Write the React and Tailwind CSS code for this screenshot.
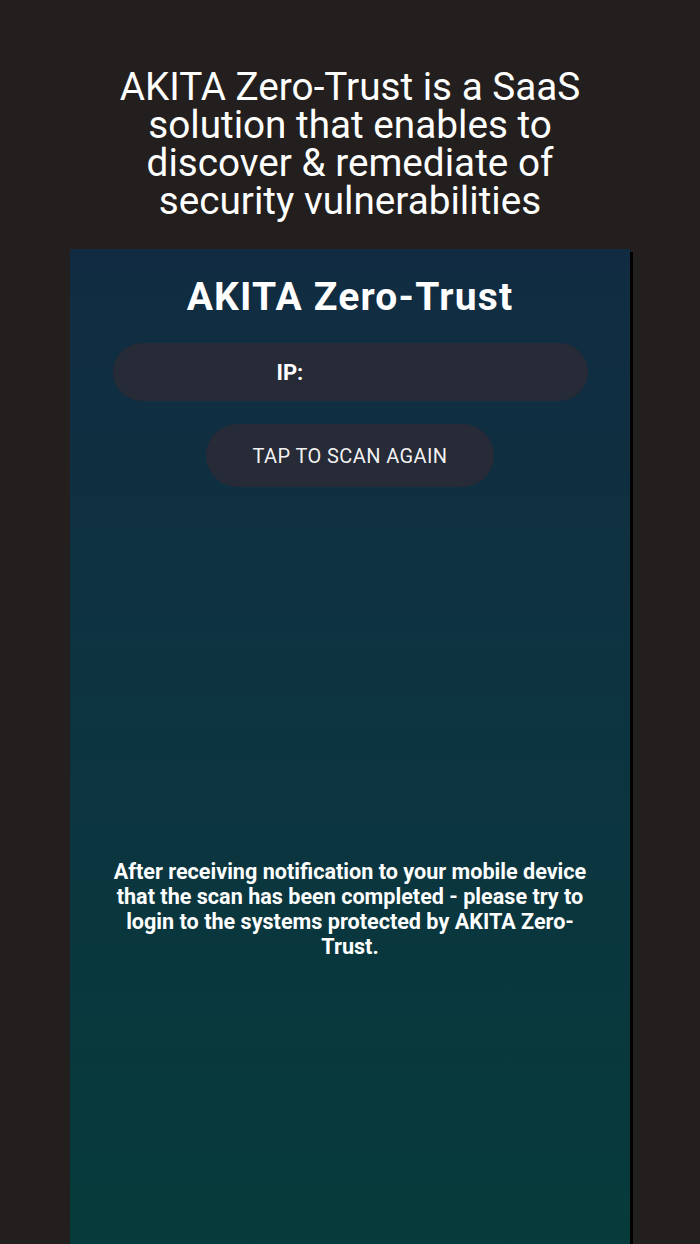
import React from 'react';

const App = () => {
  return (
    <div className="min-h-[1244px] w-[700px] bg-[#231f1e] flex flex-col items-center font-['Roboto',sans-serif] text-white">
      {/* Intro headline */}
      <h2 className="mt-[68px] w-[520px] text-center text-[38.7px] leading-[38px] font-normal">
        AKITA Zero-Trust is a SaaS solution that enables to discover &amp; remediate of security vulnerabilities
      </h2>

      {/* Phone screen panel */}
      <div className="mt-[29px] w-[560px] flex-1 h-[994px] bg-gradient-to-b from-[#112c42] via-[#0c3440] to-[#063b3b] shadow-[3px_3px_0_#000] flex flex-col items-center">
        <h1 className="mt-[27px] text-[39px] leading-[42px] font-bold tracking-[1.2px]">AKITA Zero-Trust</h1>

        <div className="mt-[25px] w-[475px] h-[58px] rounded-full bg-[#272a37] flex items-center">
          <span className="ml-[164px] text-[22px] font-bold">IP:</span>
        </div>

        <button className="mt-[23px] w-[288px] h-[63px] rounded-full bg-[#272a37] text-[20px] tracking-[0.4px] text-white/95 font-normal">
          TAP TO SCAN AGAIN
        </button>

        <p className="mt-[372px] w-[484px] text-center text-[21.6px] leading-[25px] font-bold">
          After receiving notification to your mobile device that the scan has been completed - please try to login to the systems protected by AKITA Zero-Trust.
        </p>
      </div>
    </div>
  );
};

export default App;
